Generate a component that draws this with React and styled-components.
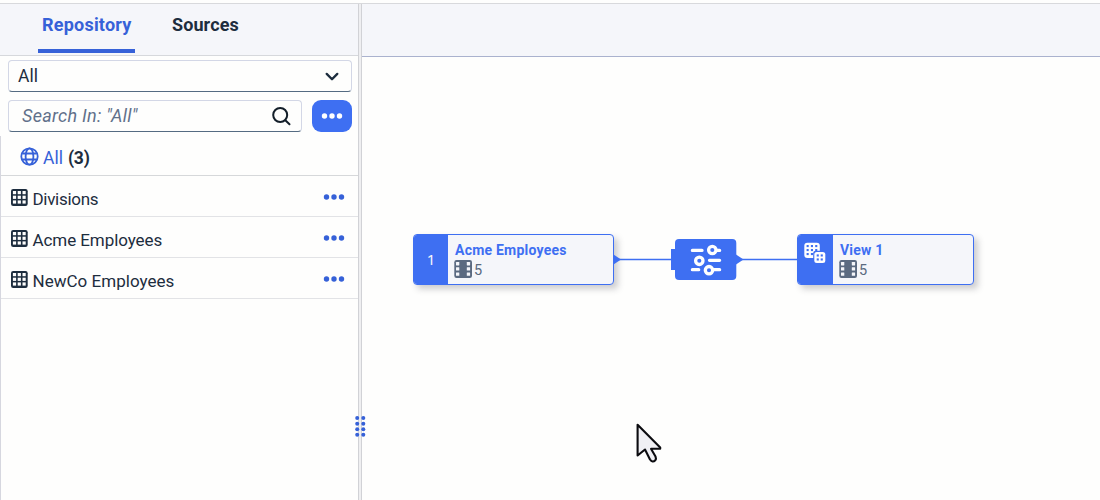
import React from "react";
import styled, { createGlobalStyle } from "styled-components";

const Global = createGlobalStyle`
  *, *::before, *::after { box-sizing: border-box; }
  body { margin: 0; background: #fefefd; overflow: hidden;
    font-family: Roboto, "Liberation Sans", sans-serif; color: #1d2d3e; }
  svg { display: block; flex: none; }
`;

const Page = styled.div`
  height: 500px;
  display: flex;
  flex-direction: column;
  background: #fefefd;
`;
const TopEdge = styled.div`
  flex: none;
  height: 4px;
  border-bottom: 1px solid #d8d9dc;
`;
const Columns = styled.div`
  flex: 1;
  min-height: 0;
  display: flex;
`;
const Sidebar = styled.aside`
  width: 358px;
  display: flex;
  flex-direction: column;
`;
const Tabs = styled.nav`
  height: 52px;
  display: flex;
  gap: 33px;
  padding-left: 38px;
  background: #f5f6fa;
  border-bottom: 1px solid #d6d8dc;
`;
const Tab = styled.div`
  height: 49px;
  padding: 8px 4px 0;
  width: ${(p) => p.$width}px;
  font-size: 18px;
  line-height: 26px;
  font-weight: 700;
  white-space: nowrap;
  letter-spacing: ${(p) => p.$track || 0}px;
  color: ${(p) => (p.$active ? "#3661d8" : "#1d2d3e")};
  border-bottom: 4px solid ${(p) => (p.$active ? "#3661d8" : "transparent")};
  border-radius: 2px 2px 0 0;
`;
const Filters = styled.div`
  height: 80px;
  padding: 4px 6px 0 8px;
  display: flex;
  flex-direction: column;
  gap: 8px;
`;
const Field = styled.div`
  height: 32px;
  width: ${(p) => p.$width}px;
  display: flex;
  align-items: center;
  justify-content: space-between;
  padding: 0 ${(p) => p.$right}px 0 ${(p) => p.$left}px;
  border: 1px solid #d3d7e6;
  border-bottom-color: #556b82;
  border-radius: 4px;
  background: #fefefd;
  font-size: 17.5px;
  line-height: 30px;
`;
const FieldRow = styled.div`
  display: flex;
  gap: 10px;
`;
const Placeholder = styled.span`
  font-style: italic;
  font-size: 18px;
  color: #61708a;
  letter-spacing: 0.28px;
`;
const MoreButton = styled.div`
  width: 40px;
  height: 32px;
  display: flex;
  align-items: center;
  justify-content: center;
  border-radius: 9px;
  background: #3e6ff2;
`;
const Results = styled.div`
  flex: 1;
  border-left: 1px solid #d6d7df;
`;
const Summary = styled.div`
  height: 40px;
  display: flex;
  align-items: center;
  padding: 1px 0 0 19px;
  border-bottom: 1px solid #d6d8da;
  font-size: 17.5px;
`;
const SummaryLink = styled.span`
  margin: 0 5px 0 4px;
  padding-top: 4px;
  color: #3661d8;
`;
const Count = styled.b`
  padding-top: 4px;
  font-size: 17.5px;
  letter-spacing: -0.2px;
`;
const Row = styled.div`
  height: 41px;
  display: flex;
  align-items: center;
  padding: 2px 13px 0 9px;
  border-bottom: 1px solid #e2e3e6;
`;
const RowLabel = styled.span`
  flex: 1;
  padding: 4px 0 0 4.5px;
  font-size: 17px;
  line-height: 20px;
  letter-spacing: ${(p) => p.$track || 0}px;
`;
const Splitter = styled.div`
  position: relative;
  width: 4px;
  background: #efeff1;
  border-left: 1px solid #d1d2d6;
  border-right: 1px solid #d1d2d6;
`;
const Grip = styled.div`
  position: absolute;
  left: -4px;
  top: 412px;
`;
const Main = styled.main`
  flex: 1;
  display: flex;
  flex-direction: column;
`;
const Toolbar = styled.header`
  height: 53px;
  background: #f5f6fa;
  border-bottom: 1px solid #aab2ce;
`;
const Canvas = styled.div`
  position: relative;
  flex: 1;
`;
const Node = styled.div`
  position: absolute;
  left: ${(p) => p.$x}px;
  top: 177px;
  width: ${(p) => p.$width}px;
  height: 51px;
  display: flex;
  border: 1px solid #3e6ff2;
  border-radius: 4px;
  overflow: hidden;
  background: #f5f6fa;
  box-shadow: 4px 4px 6px rgba(60, 60, 70, 0.25);
`;
const NodeBadge = styled.div`
  width: ${(p) => p.$width}px;
  background: #3e6ff2;
  color: #f5f6fa;
  display: flex;
  justify-content: center;
  padding: ${(p) => p.$top}px ${(p) => p.$right || 0}px 0 0;
  font: 15px/18px "Noto Sans", sans-serif;
`;
const NodeBody = styled.div`
  padding: 6px 0 0 7px;
`;
const NodeTitle = styled.div`
  font-size: 14px;
  line-height: 19px;
  font-weight: 700;
  color: #3e6ff2;
  white-space: nowrap;
  letter-spacing: ${(p) => p.$track || 0}px;
`;
const NodeMeta = styled.div`
  display: flex;
  gap: 2px;
  margin-left: -1px;
  color: #5b6a80;
  font-size: 14.5px;
  line-height: 22px;
`;
const Overlay = styled.svg`
  position: absolute;
  left: ${(p) => p.$x}px;
  top: ${(p) => p.$y}px;
`;

const Dots = ({ color, w = 22, r = 2.7, step = 7.7 }) => (
  <svg width={w} height="8" viewBox={`0 0 ${w} 8`} fill={color}>
    {[-1, 0, 1].map((i) => (
      <circle key={i} cx={w / 2 + i * step} cy="4" r={r} />
    ))}
  </svg>
);

const TableIcon = () => (
  <svg width="18" height="18" viewBox="0 0 18 18">
    <rect x="1" y="1" width="16.7" height="17" rx="2.2" fill="#1d2d3e" />
    {[3, 7.7, 12.4].map((y) =>
      [2.9, 7.7, 12.5].map((x) => (
        <rect key={`${x}-${y}`} x={x} y={y} width="3.2" height="3.2" fill="#fefefd" />
      ))
    )}
  </svg>
);

const GlobeIcon = () => (
  <svg width="19" height="19" viewBox="0 0 19 19" fill="none" stroke="#3661d8" strokeWidth="1.8">
    <circle cx="9.5" cy="9.5" r="8.2" />
    <ellipse cx="9.5" cy="9.5" rx="3.9" ry="8.2" />
    <path d="M2.2 6.5H16.8M2.2 12.5H16.8" />
  </svg>
);

const FilmIcon = () => (
  <svg width="18" height="18" viewBox="0 0 18 18">
    <rect x="0.3" y="0" width="17.7" height="18" rx="2.2" fill="#5b6a80" />
    {[2, 7.2, 12.4].map((y) =>
      [2, 12.8].map((x) => (
        <rect key={`${x}-${y}`} x={x} y={y} width="3.3" height="3.4" rx="0.4" fill="#f5f6fa" />
      ))
    )}
  </svg>
);

const ViewIcon = () => (
  <svg width="22" height="22" viewBox="0 0 22 22">
    <rect x="0.3" y="0.8" width="15.5" height="15.2" rx="3" fill="#fefefe" />
    {[3, 7, 11].map((y) =>
      [2.6, 6.9, 11.2].map((x) => (
        <rect key={`${x}-${y}`} x={x} y={y} width="2.1" height="2.1" fill="#3e6ff2" />
      ))
    )}
    <rect x="9.2" y="8.8" width="13" height="13" rx="2.5" fill="#3e6ff2" />
    <rect x="10.3" y="10" width="11" height="11" rx="2.5" fill="#fefefe" />
    {[12.4, 16.4].map((y) =>
      [12.7, 16.7].map((x) => (
        <rect key={`${x}-${y}`} x={x} y={y} width="2.1" height="2.1" fill="#3e6ff2" />
      ))
    )}
  </svg>
);

const rows = [
  { name: "Divisions", track: -0.3 },
  { name: "Acme Employees", track: -0.07 },
  { name: "NewCo Employees", track: 0.03 },
];

export default function App() {
  return (
    <Page>
      <Global />
      <TopEdge />
      <Columns>
        <Sidebar>
          <Tabs>
            <Tab $active $width={97} $track={0.22}>Repository</Tab>
            <Tab $width={80} $track={0.1}>Sources</Tab>
          </Tabs>
          <Filters>
            <Field $width={344} $left={9} $right={12}>
              <span>All</span>
              <svg width="14" height="10" viewBox="0 0 14 10" fill="none" stroke="#1d2d3e" strokeWidth="2.3" strokeLinecap="round" strokeLinejoin="round">
                <path d="M1.7 2.9L7 8.3L12.3 2.9" />
              </svg>
            </Field>
            <FieldRow>
              <Field $width={294} $left={13} $right={10}>
                <Placeholder>Search In: "All"</Placeholder>
                <svg width="19" height="19" viewBox="0 0 19 19" fill="none" stroke="#131e29" strokeWidth="2" strokeLinecap="round">
                  <circle cx="8.2" cy="8" r="7" />
                  <path d="M13.3 13.2L17.5 17.2" />
                </svg>
              </Field>
              <MoreButton><Dots color="#fefefe" step={7.5} /></MoreButton>
            </FieldRow>
          </Filters>
          <Results>
            <Summary>
              <GlobeIcon />
              <SummaryLink>All</SummaryLink>
              <Count>(3)</Count>
            </Summary>
            {rows.map((r) => (
              <Row key={r.name}>
                <TableIcon />
                <RowLabel $track={r.track}>{r.name}</RowLabel>
                <Dots color="#3661d8" step={7.5} />
              </Row>
            ))}
          </Results>
        </Sidebar>
        <Splitter>
          <Grip>
            <svg width="12" height="22" viewBox="0 0 12 22" fill="#3661d8">
              {[2, 7.7, 13.2, 18.7].map((y) => (
                <g key={y}>
                  <circle cx="2.2" cy={y} r="2" />
                  <circle cx="8.3" cy={y} r="2" />
                </g>
              ))}
            </svg>
          </Grip>
        </Splitter>
        <Main>
          <Toolbar />
          <Canvas>
            <Overlay $x={251} $y={176} width="190" height="54" viewBox="0 0 190 54">
              <path d="M0 26.5H60M124 26.5H186" stroke="#3e6ff2" strokeWidth="1.3" />
              <rect x="58" y="16" width="8" height="21" fill="#3e6ff2" />
              <rect x="62" y="6" width="61.3" height="41" rx="4" fill="#3e6ff2" />
              <path d="M123 21.5L130.5 26.5L123 31.5Z" fill="#3e6ff2" />
              <g stroke="#fefefe" strokeWidth="3.3" strokeLinecap="round" fill="#3e6ff2">
                <path d="M79.4 17.4H89M101 17.4H106.6M96.5 27.3H106.6M79.4 36.7H85.7M97 36.7H106.6" />
                <circle cx="99.3" cy="17" r="3.7" />
                <circle cx="86.3" cy="27.8" r="3.7" />
                <circle cx="96" cy="37.2" r="3.7" />
              </g>
            </Overlay>
            <Node $x={51} $width={201}>
              <NodeBadge $width={34} $top={15}>1</NodeBadge>
              <NodeBody>
                <NodeTitle $track={0.22}>Acme Employees</NodeTitle>
                <NodeMeta><FilmIcon />5</NodeMeta>
              </NodeBody>
            </Node>
            <Overlay $x={251} $y={197} width="10" height="11" viewBox="0 0 10 11">
              <path d="M0.5 0.5L8 5.5L0.5 10.5Z" fill="#3e6ff2" />
            </Overlay>
            <Node $x={435} $width={177}>
              <NodeBadge $width={35} $top={7} $right={2}><ViewIcon /></NodeBadge>
              <NodeBody>
                <NodeTitle $track={0.2}>View 1</NodeTitle>
                <NodeMeta><FilmIcon />5</NodeMeta>
              </NodeBody>
            </Node>
            <Overlay $x={273} $y={365} width="28" height="42" viewBox="0 0 28 42">
              <path d="M2.6 2.8V33.5L10 27.5L15 37.5Q17.5 41 20.3 38.2Q21.5 36.8 20.5 34.5L16 26.8H25.2V25.5Z" fill="#f0f0f4" stroke="#0c0c10" strokeWidth="2.1" strokeLinejoin="round" />
            </Overlay>
          </Canvas>
        </Main>
      </Columns>
    </Page>
  );
}
